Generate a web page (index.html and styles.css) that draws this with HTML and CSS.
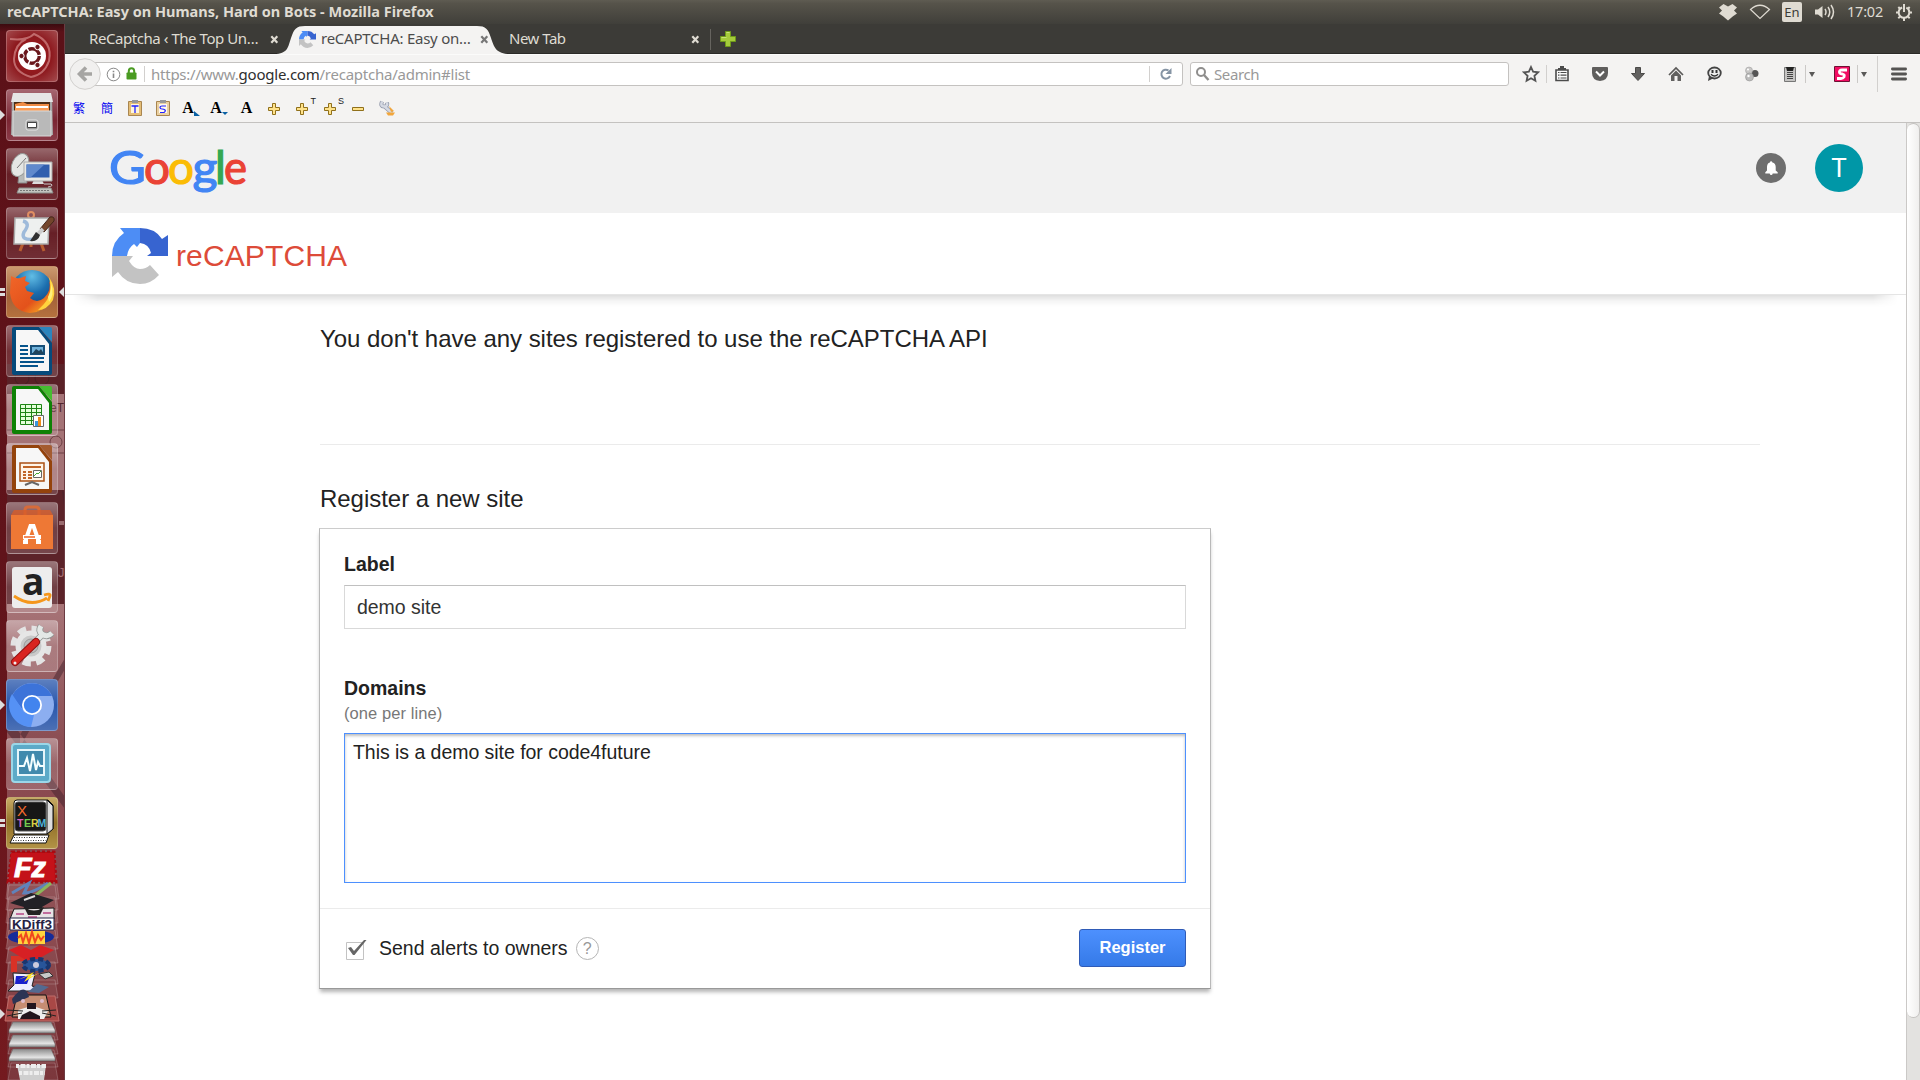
FILE: index.html
```html
<!DOCTYPE html>
<html lang="en">
<head>
<meta charset="utf-8">
<title>reCAPTCHA: Easy on Humans, Hard on Bots</title>
<link rel="stylesheet" href="styles.css">
</head>
<body>
<div class="desktop">
  <header class="panel">
    <div class="panel-title">reCAPTCHA: Easy on Humans, Hard on Bots - Mozilla Firefox</div>
    <div class="indicators">
      <svg class="ind-dropbox" width="20" height="18" viewBox="0 0 20 18"><path fill="#dfdbd2" d="M5.5 1 10 3.6 14.5 1 19 4.5 16 7.5 19 10.500 15 13.200 10 17.500 5 13.200 1 10.500 4 7.500 1 4.500Z"/></svg>
      <svg class="ind-wifi" width="22" height="16" viewBox="0 0 22 16"><path fill="none" stroke="#dfdbd2" stroke-width="1.200" d="M1.500 5.500Q11-3 20.500 5.500L11 14.500Z"/></svg>
      <span class="ind-lang">En</span>
      <svg class="ind-vol" width="22" height="18" viewBox="0 0 22 18"><path fill="#dfdbd2" d="M1 6.500h3L8.500 3v12L4 11.500H1Z"/><path fill="none" stroke="#dfdbd2" stroke-width="1.500" d="M11 6q2 3 0 6M14 4q3.500 5 0 10M17 2q5 7 0 14"/></svg>
      <span class="ind-clock">17:02</span>
      <svg class="ind-gear" width="18" height="18" viewBox="0 0 18 18"><g fill="none" stroke="#dfdbd2"><circle cx="9" cy="9.500" r="5.300" stroke-width="2" stroke-dasharray="29 4.300" stroke-dashoffset="-10.500" transform="rotate(180 9 9.500)"/><path stroke-width="2" d="M9 1v8M9 14.500V18M1 9.500h2.500M14.500 9.500H17M3.300 4l1.800 1.800M14.700 4l-1.800 1.800M3.300 15.200l1.800-1.800M14.700 15.200l-1.800-1.800"/></g></svg>
    </div>
  </header>

  <div class="workspace">
    <nav class="launcher">
      <svg class="launcher-ghost" width="65" height="1056" viewBox="0 24 65 1056">
        <defs><linearGradient id="gb" x1="0" y1="0" x2="0" y2="1"><stop offset="0" stop-color="#a77477"/><stop offset=".28" stop-color="#8c4f54"/><stop offset=".55" stop-color="#8a454b"/><stop offset="1" stop-color="#6f2429"/></linearGradient></defs>
        <path fill="#5a2127" d="M7 364h58v31H7z"/><path fill="#a47376" d="M7 394h58v98H7z"/><path fill="#5c2329" d="M7 490h58v115H7z"/><path fill="url(#gb)" d="M7 604h58v476H7z"/>
        <path fill="none" stroke="#6d4045" d="M65 430H7M65 453H7"/><circle cx="56" cy="442" r="6" fill="none" stroke="#6d4045"/><path fill="#41222b" d="m62 490 3 4v20zM65 658 20 735v12l45-78zM7 715l58 82v12L7 732z" opacity=".5"/>
        <circle cx="22" cy="378" r="7" fill="none" stroke="#452025"/><circle cx="42" cy="378" r="7" fill="none" stroke="#452025"/>
        <text x="50" y="412" font-size="12" fill="#53252c" textLength="14">e T</text><text x="58" y="577" font-size="13" fill="#a56e72" textLength="6">J</text>
        <path fill="#9a6b6f" d="M59 521h6v4h-6z"/><path stroke="#6b3b42" d="M64.500 24v1056"/>
      </svg>
      <div class="tiles">
        <div class="tile tile-ubuntu"><svg viewBox="0 0 52 52"><path fill="none" stroke="#d48a8a" stroke-width="2" opacity=".7" d="M4 9q17 2 24-5Q47 12 43 31q-5 14-18 16Q8 42 8 29 9 14 20 9"/><circle cx="26" cy="26" r="14" fill="#fff"/><circle cx="26" cy="26" r="7.300" fill="none" stroke="#6a171c" stroke-width="3.400" stroke-dasharray="13.800 1.500"/><g fill="#6a171c" stroke="#fff"><circle cx="15.500" cy="26" r="2.700"/><circle cx="31.500" cy="17" r="2.700"/><circle cx="31.500" cy="35" r="2.700"/></g></svg></div>
        <div class="tile tile-files"><i class="run"></i><svg viewBox="0 0 52 52"><path fill="#a7a7a7" d="M6 8h40l1 38H5z"/><path fill="#e6e6e6" d="M7 4h38l2 9H5z"/><path fill="#4d2e17" d="M8 13h36v10H8z"/><path fill="#f08c45" d="m9 15 8-2 4 2h22v8H9z"/><path fill="#fff" d="M10 17h32v2H10z"/><path fill="#fb9c55" d="M9 19h34v3H9z"/><path fill="#b9b9b9" stroke="#d9d9d9" d="M7 22h38v25H7z"/><rect x="20" y="31" width="12" height="10" rx="2" fill="#999" stroke="#e5e5e5"/><path fill="#fff" stroke="#444" d="M21.500 33.500h9v5h-9z"/></svg></div>
        <div class="tile"><svg viewBox="0 0 52 52"><path fill="#b7bab8" stroke="#888" d="M13 25h5l3 10h-9z"/><ellipse cx="14" cy="17" rx="8" ry="12" transform="rotate(25 14 17)" fill="#e4e6e4" stroke="#969996"/><path stroke="#777" d="m11 20 9-10"/><path fill="#ddd" d="M28 32h8l2 4H26z"/><path fill="#e8e8e4" stroke="#aaa" d="M18 14h28v19H18z"/><path fill="#315fae" d="M20.500 16.500h23v13h-23z"/><path fill="#6089cc" d="M20.500 16.500h18l-14 13h-4z"/><path fill="#c2c4bf" stroke="#898b87" d="M13 40h32l2 5H11z"/><path stroke="#777" stroke-dasharray="2 1" d="M14 42.500h30"/><path fill="none" stroke="#ccc" d="M38 36h7q3 2-3 3"/></svg></div>
        <div class="tile"><svg viewBox="0 0 52 52"><path fill="none" stroke="#b85e31" stroke-width="3" d="m17 36-3 8M35 36l3 8M25 37v3"/><circle cx="25" cy="8" r="3" fill="none" stroke="#df8e62" stroke-width="2"/><path fill="#eef0ef" stroke="#aaa" stroke-width="1.500" d="M9 11h34l-1 26H8z"/><path fill="none" stroke="#89acd4" stroke-width="3.500" d="M17 14q8 2 1 11-4 9 11 7" opacity=".8"/><path fill="#73452b" stroke="#432519" d="m34 22 10-12q5-1 4 4L38 25z"/><path stroke="#ccc" stroke-width="4" d="m37 22-5 5"/><path fill="#303030" d="m30 25 4 3q-2 7-10 6z"/></svg></div>
        <div class="tile tile-firefox"><i class="run two"></i><i class="focus"></i><svg viewBox="0 0 52 52"><defs><radialGradient id="fb" cx=".5" cy=".15" r=".8"><stop offset="0" stop-color="#61bde5"/><stop offset=".5" stop-color="#1c6eae"/><stop offset="1" stop-color="#123b78"/></radialGradient><linearGradient id="fo" x1="0" y1="0" x2="1" y2="1"><stop offset="0" stop-color="#f16629"/><stop offset=".6" stop-color="#e3521b"/><stop offset="1" stop-color="#ffcb28"/></linearGradient></defs><circle cx="26" cy="25" r="21" fill="url(#fb)"/><path fill="url(#fo)" d="M5 10q5 3 9 2l6-2-1 5 5 2-5 4 2 4 7 2-4 5q7 6 14 0 8-8 5-17 7 9 1 20-7 12-20 12Q6 45 4 27z"/><path fill="#ffd33d" d="M38 38q9-10 5-27 8 12 4 23-6 10-15 10z"/><path fill="#fff07c" d="M42 31q4-7 3-15 4 13-2 20z"/></svg></div>
        <div class="tile tile-clear"><svg viewBox="0 0 52 52"><path fill="#064a7b" d="M6 4q0-2 2-2h25l13 16v30q0 2-2 2H8q-2 0-2-2z"/><path fill="#2b85bd" d="M33 2h11q2 0 2 2v13z"/><path fill="#f7f7f7" d="M10 5h22l11 14v27H10z"/><path stroke="#06548b" stroke-width="2" d="M14 21h8M14 25h8M14 29h8M14 33h24M14 37h24M14 41h18"/><path fill="#6fb1da" stroke="#164f78" stroke-width="2" d="M25 21h13v8H25z"/><path fill="#20445b" d="m26 29 4-5 3 2 2-2 3 5z"/></svg></div>
        <div class="tile tile-clear"><svg viewBox="0 0 52 52"><path fill="#0e8105" d="M6 4q0-2 2-2h25l13 16v30q0 2-2 2H8q-2 0-2-2z"/><path fill="#45bd30" d="M33 2h11q2 0 2 2v13z"/><path fill="#f7f7f7" d="M10 5h22l11 14v27H10z"/><path fill="#e3ffd9" stroke="#1d8415" d="M14.500 20.500h21v20h-21zM14 24.500h22M14 28.500h22M14 32.500h22M14 36.500h22M19.500 20v21M25.500 20v21M30.500 20v21"/><path fill="#fff" stroke="#666" d="M27.500 31.500h10v11h-10z"/><path fill="#3996db" d="M29 37h3v5h-3z"/><path fill="#ef8b19" d="M32 33h3v9h-3z"/></svg></div>
        <div class="tile tile-clear"><svg viewBox="0 0 52 52"><path fill="#94430c" d="M6 4q0-2 2-2h25l13 16v30q0 2-2 2H8q-2 0-2-2z"/><path fill="#a45b30" d="M33 2h11q2 0 2 2v13z"/><path fill="#f7f7f7" d="M10 5h22l11 14v27H10z"/><path fill="#fff5e8" stroke="#aa5014" stroke-width="1.500" d="M14 20h24v18H14z"/><path stroke="#c06527" stroke-width="1.800" d="M17 24h18M17 29h3M17 32h3M17 35h3M22 29h4M22 32h4M22 35h4"/><path fill="#fff" stroke="#666" d="M27.500 27.500h8v7h-8z"/><path fill="none" stroke="#47a838" d="m28 33 3-3 1 1 3-3"/><path fill="none" stroke="#666" stroke-width="2" d="m19 42 7-3 7 3"/></svg></div>
        <div class="tile tile-clear"><svg viewBox="0 0 52 52"><path fill="none" stroke="#d66b3a" stroke-width="3" d="M19 18V8q0-3 3-3h8q3 0 3 3v10"/><path fill="#ee7835" d="M5 13h42v34H5z"/><path fill="#d75d29" d="m5 13 3-5h36l3 5z" opacity=".8"/><path fill="none" stroke="#fff" stroke-width="4" d="M19 40 24.500 24h3L33 40M17 35h18M17 40h5M30 40h5"/><path stroke="#ef6424" stroke-width="1.500" d="M18 35h11"/></svg></div>
        <div class="tile tile-clear"><svg viewBox="0 0 52 52"><rect x="6" y="6" width="40" height="41" rx="3" fill="#ededed"/><text x="16" y="34" font-family="Open Sans" font-weight="700" font-size="37" fill="#222">a</text><path fill="none" stroke="#f5971c" stroke-width="2.800" d="M8 35q17 12 33 2M38 34q7-2 6 1l-2 5"/></svg></div>
        <div class="tile tile-clear"><svg viewBox="0 0 52 52"><circle cx="25" cy="26" r="17" fill="none" stroke="#e3e3e3" stroke-width="7" stroke-dasharray="8 5.350"/><circle cx="25" cy="26" r="13" fill="#c9c9c9" stroke="#e6e6e6" stroke-width="5"/><circle cx="25" cy="26" r="7" fill="#bbb" stroke="#999"/><path fill="none" stroke="#8e9391" stroke-width="6.500" d="m31 20 7-7M35 6q-3 5 1 8 5 4 10-1"/><path fill="none" stroke="#e3e8e6" stroke-width="5" d="m31 20 7-7M35 6q-3 5 1 8 5 4 10-1"/><path stroke="#8f1313" stroke-width="8" stroke-linecap="round" d="M9 42 30 22"/><path stroke="#d92420" stroke-width="6" stroke-linecap="round" d="M9 42 30 22"/><circle cx="9" cy="43" r="1.500" fill="#eee"/></svg></div>
        <div class="tile tile-chromium"><i class="run"></i><svg viewBox="0 0 52 52"><circle cx="26" cy="26" r="22" fill="#8caef0"/><path fill="#3c73d9" d="M6 17a22 22 0 0 1 40 0H26L17 31z"/><path fill="#5591f5" d="M6 15 18 33l10 3-3 12A22 22 0 0 1 6 15"/><circle cx="26" cy="26" r="10" fill="#fff"/><circle cx="26" cy="26" r="8.200" fill="#4284ee"/></svg></div>
        <div class="tile tile-clear"><svg viewBox="0 0 52 52"><rect x="6" y="6" width="38" height="38" rx="3" fill="#5caac8" stroke="#9bd7e8" stroke-width="2"/><path fill="#408aad" stroke="#e5f5fa" stroke-width="2" d="M12 12h26v25H12z"/><path fill="none" stroke="#f4ffff" stroke-width="2" d="M13 28h5l3-8 3 13 3-17 3 16 2-8 2 4h4"/></svg></div>
        <div class="tile tile-xterm"><i class="run two"></i><svg viewBox="0 0 52 52"><path fill="#fff" stroke="#111" d="M8 6q0-3 3-3h31l5 5v24l-6 5H8z"/><path fill="#ddd" stroke="#111" d="m41 3 6 6v23l-6 5z"/><rect x="9" y="5" width="31" height="29" rx="3" fill="#171717" stroke="#555"/><text x="11" y="19" font-size="15" fill="#f46b2c">X</text><g font-size="10.500" font-weight="700"><text x="11" y="30" fill="#db62ba">T</text><text x="18" y="30" fill="#72ca50">E</text><text x="25" y="30" fill="#d8d044">R</text><text x="31.500" y="30" fill="#4eb1d8">M</text></g><path fill="#fff" stroke="#111" d="M8 38h35l-3 8H4z"/><path stroke="#333" stroke-dasharray="1 1.500" d="M8 40.500h33M7 43.500h33"/></svg></div>
      </div>
      <svg class="stack" width="65" height="231" viewBox="0 849 65 231">
        <defs><linearGradient id="dr" x1="0" y1="0" x2="0" y2="1"><stop offset="0" stop-color="#8c8c8c"/><stop offset=".7" stop-color="#e4e4e4"/><stop offset="1" stop-color="#888"/></linearGradient></defs>
        <g fill="#fff" fill-opacity=".09" stroke="#fff" stroke-opacity=".2"><path d="m9 872 46 0 4 27H6zM9 885h46l3 25H6zM9 897h46l3 26H6zM9 910h46l3 28H6zM9 930h46l3 19H6zM9 947h46l3 16H6zM9 962h46l3 22H6zM9 980h46l3 18H6zM12 1022h42l4 18H8zM12 1036h42l4 18H8zM12 1050h42l4 17H8zM11 1063h44l3 17H8z"/></g>
        <path fill="#b80d12" stroke="#a80b12" stroke-width="3" stroke-dasharray="3 2" d="M12 852h42l2 30H8z"/><path fill="#c41219" d="M11 853h43l1 27H9z"/>
        <text x="14" y="877" font-size="28" font-weight="700" font-style="italic" fill="#fff" stroke="#fff" textLength="32" lengthAdjust="spacingAndGlyphs">Fz</text>
        <path fill="none" stroke="#5f83bb" stroke-width="3" d="M12 893 29 883 24 893Q31 894 48 883"/><path stroke="#8bb65b" stroke-width="3" d="m51 883-20 16"/>
        <path fill="#222126" d="m10 903 21-10 23 7-12 7q6 5-4 7H21l3-7z"/><path stroke="#ddd" stroke-width="2" d="m24 900 11-4"/>
        <path fill="#e8e3e5" stroke="#181818" d="m14 909 40-1 0 11H10z"/><path fill="#222" d="M24 907q10 7 20 0l-4 8H28z"/><path stroke="#c26c9d" stroke-width="2" d="M16 914h8M28 917h9M43 913h8"/><path fill="#fff" stroke="#252343" d="M10 918h44v12H10z"/><text x="12" y="929" font-size="12" font-weight="700" fill="#262244" textLength="40" lengthAdjust="spacingAndGlyphs">KDiff3</text>
        <ellipse cx="31" cy="937" rx="23" ry="7" fill="#162b99"/><path fill="#ffd33e" d="M18 931h27v13H18z"/><path fill="none" stroke="#f0471f" stroke-width="2" d="m18 938 3-3 2 7 3-9 3 10 3-11 3 10 3-7 3 5 3-4"/>
        <path fill="#d83226" d="M11 956h17v5H17v11h-6z"/><path fill="#d72024" d="m9 950 12-5 10 5 9-5 14 5-23 13z"/>
        <ellipse cx="36" cy="965" rx="13" ry="6" fill="#28559a" stroke="#19366f" stroke-width="4" stroke-dasharray="5 3"/><circle cx="36" cy="965" r="3" fill="#ccd"/>
        <path fill="#eef" stroke="#222" d="m13 973 22 1-3 12 8 3-6 2H8l6-6z"/><path fill="#1920cc" d="M16 976h14l-3 8H15z"/><path fill="#ffe425" d="m18 980 16-8-4 5 9-4-15 9 4-6z"/><path fill="#c7c9c8" stroke="#333" d="m39 974 10-2 4 4-8 3z"/><path fill="#536a91" d="m28 992 9-8 12 3-10 6z"/>
        <path fill="#a94846" stroke="#c06c69" d="M9 996h46l4 25H5z"/><path fill="#c68d73" stroke="#111" d="M17 995h29l5 22H12z"/><path fill="#2d3454" d="M12 999q13-18 17-2l-16 7z"/><path fill="#eee" d="m18 1010 10-3h8l12 4-4 8H18z"/><path fill="#21151d" d="M27 1003h9v6h-9zM22 1015l8-4 10 5v3H20z"/><path stroke="#222" d="m7 1010 16 1M7 1016l15-3M56 1010l-14 1M56 1016l-14-3"/><circle cx="23" cy="1001" r="2" fill="#dbc"/><circle cx="42" cy="1001" r="2" fill="#dbc"/>
        <g fill="url(#dr)" stroke="#666" stroke-width=".5"><path d="m13 1022 38 0 4 8v3H9v-3z"/><path d="M13 1035h38l4 9v3H9v-3z"/><path d="M13 1049h38l4 9v3H9v-3z"/></g><path fill="#cfcfcf" d="M17 1065h29l-2 15H20z"/><path stroke="#eee" stroke-width="4" stroke-dasharray="3 1.500 5 1" d="M16 1066h30M19 1073h26"/>
        <path fill="#ddd" d="m0 1009 5 5-5 5z"/>
      </svg>
    </nav>

    <main class="browser">
      <div class="tabs">
        <div class="tab tab-first"><span class="t1">ReCaptcha ‹ The Top Un…</span><svg class="x" viewBox="0 0 9 9"><path d="m1.300 1.300 6 6.400m0-6.400-6 6.400"/></svg></div>
        <div class="tab tab-active">
          <svg class="tab-shape" width="240" height="29" viewBox="0 0 240 29"><path fill="#f4f3f2" d="M0 29C14 29 14 22 17 13 20 4 22 1 31 1H203C212 1 214 4 217 13 220 22 222 29 236 29Z" transform="translate(-6)"/></svg>
          <svg class="favicon" width="17" height="17" viewBox="0 0 56 56"><use href="#rc"/></svg><span class="t2">reCAPTCHA: Easy on…</span><svg class="x dark" viewBox="0 0 9 9"><path d="m1.300 1.300 6 6.400m0-6.400-6 6.400"/></svg>
        </div>
        <div class="tab tab-new"><span class="t3">New Tab</span><svg class="x" viewBox="0 0 9 9"><path d="m1.300 1.300 6 6.400m0-6.400-6 6.400"/></svg></div>
        <svg class="plus" width="18" height="18" viewBox="0 0 18 18"><path fill="#a5cb3b" stroke="#6f9a1a" d="M6.500 1.500h5v5h5v5h-5v5h-5v-5h-5v-5h5z"/><path stroke="#c9e378" d="M7.500 2.500h3M2.500 7.500h5"/></svg>
      </div>

      <div class="navbar">
        <div class="urlbar">
          <svg class="back" width="32" height="32" viewBox="0 0 32 32"><circle cx="16" cy="16" r="15.300" fill="#f1f0ef" stroke="#d2d0ce"/><path fill="none" stroke="#a6a5a3" stroke-width="3.600" d="m17 9.500-6.500 6.500 6.500 6.500M11 16h12"/></svg>
          <svg class="info" width="15" height="15" viewBox="0 0 15 15"><circle cx="7.500" cy="7.500" r="6.300" fill="none" stroke="#888"/><path stroke="#888" stroke-width="1.600" d="M7.500 6.500V11M7.500 3.700v1.500"/></svg>
          <svg class="lock" width="11" height="13" viewBox="0 0 11 13"><path fill="none" stroke="#4a9b22" stroke-width="2" d="M2.800 6V4q0-2.800 2.700-2.800T8.200 4v2"/><rect x=".5" y="5.500" width="10" height="7" rx=".8" fill="#4a9b22"/></svg>
          <i class="sep"></i>
          <span class="url">https://www.<b>google.com</b>/recaptcha/admin#list</span>
          <span class="reload"><svg width="14" height="14" viewBox="0 0 14 14"><path fill="none" stroke="#8594a4" stroke-width="2" d="M11 9A4.500 4.500 0 1 1 9.500 3.500"/><path fill="#8594a4" d="M12.500 1v6h-6z"/></svg></span>
        </div>
        <div class="search"><svg width="16" height="16" viewBox="0 0 16 16"><circle cx="6" cy="6" r="4" fill="none" stroke="#8f8e8d" stroke-width="2"/><path stroke="#8f8e8d" stroke-width="2.400" d="m9 9 4.500 5"/></svg><span>Search</span></div>
        <div class="tools">
          <svg class="star" width="18" height="18" viewBox="0 0 18 18"><path fill="none" stroke="#555" stroke-width="1.800" d="m9 2 2.100 4.700 5 .6-3.700 3.500 1 5L9 13.300l-4.400 2.500 1-5L1.900 7.300l5-.6z"/></svg>
          <i class="sep"></i>
          <span class="tool"><svg width="16" height="16" viewBox="0 0 16 16"><path fill="#fafafa" stroke="#4b4b4b" stroke-width="1.600" d="M2 4h12v10.500H2z"/><path fill="#4b4b4b" d="M4 4V2h2V0h4v2h2v2z"/><path stroke="#4b4b4b" stroke-width="1.200" d="M4 6.500h1.500M6.500 6.500h6M4 9.200h1.500M6.500 9.200h6M4 12h1.500M6.500 12h6"/></svg></span>
          <span class="tool"><svg width="16" height="16" viewBox="0 0 16 16"><path fill="#5f5e5d" d="M0 2Q0 1 1 1h14q1 0 1 1v5q0 7-8 8Q0 14 0 7z"/><path fill="none" stroke="#fff" stroke-width="2" d="m4 5.500 4 4 4-4"/></svg></span>
          <span class="tool"><svg width="16" height="16" viewBox="0 0 16 16"><path fill="#626160" stroke="#4b4a49" d="M5.500 1.500h5v6h4L8 14.500l-6.500-7h4z"/></svg></span>
          <span class="tool"><svg width="16" height="16" viewBox="0 0 16 16"><path fill="none" stroke="#5b5a59" stroke-width="1.700" d="m1 9 7-7 7 7"/><path fill="#626160" d="m8 4.500 5 5V15H9.500v-5h-3v5H3V9.500z"/></svg></span>
          <span class="tool"><svg width="16" height="16" viewBox="0 0 16 16"><ellipse cx="8.500" cy="7" rx="6.300" ry="5.500" fill="#eee" stroke="#444" stroke-width="1.800"/><path fill="#444" d="m3 10-1 5 6-3z"/><path stroke="#333" stroke-width="2" d="M6.500 4v3M10.500 4v3"/><path fill="none" stroke="#333" stroke-width="1.300" d="M5 8.300q3.500 3.500 7 0"/></svg></span>
          <span class="tool"><svg width="16" height="16" viewBox="0 0 16 16"><circle cx="11" cy="7.500" r="3.500" fill="#555"/><circle cx="5" cy="4.500" r="3.500" fill="#c8c7c6" stroke="#999" stroke-width=".5"/><circle cx="5.500" cy="11" r="4" fill="#bbb" stroke="#888" stroke-width=".5"/><circle cx="4" cy="3.500" r="1" fill="#fff"/><circle cx="4.500" cy="10" r="1.200" fill="#fff"/></svg></span>
          <span class="tool"><svg width="16" height="16" viewBox="0 0 16 16"><path fill="#c5c4c3" stroke="#777" d="M2.500 1.500h11v14h-11z"/><path fill="#222" d="M4 1h8l-1 4H5z"/><path stroke="#444" d="M5 6.500h6M5 8.500h6M5 10.500h6M5 12.500h6"/></svg></span>
          <span class="drop"><i></i></span>
          <span class="stylish"><svg width="16" height="16" viewBox="0 0 16 16"><path fill="#f10c62" stroke="#6e1234" d="M.5.500h15v15H.5z"/><path fill="none" stroke="#fff" stroke-width="2.800" d="M13 4H8Q5 4 5.500 6.500 6 8 8.500 8 11 8.500 10 11 9 12.500 7 12.500H3"/></svg></span>
          <span class="drop"><i></i></span>
          <i class="sep tall"></i>
          <svg class="menu" width="16" height="14" viewBox="0 0 16 14"><path stroke="#555453" stroke-width="2.800" stroke-linecap="round" d="M1.400 2h13.200M1.400 7h13.200M1.400 12h13.200"/></svg>
        </div>
      </div>

      <div class="addons">
        <span class="han">繁</span><span class="han">簡</span>
        <span><svg width="14" height="16" viewBox="0 0 14 16"><path fill="#e5be78" stroke="#a98650" d="M.5 1.500h13v14H.5z"/><path fill="#fff5dc" d="M3 4h8v9H3z"/><path fill="#999" d="M4 0h6v3H4z"/><path stroke="#22f" stroke-width="1.300" d="M3.500 6h7M7 6v7"/></svg></span>
        <span><svg width="14" height="16" viewBox="0 0 14 16"><path fill="#ead0a2" stroke="#a98650" d="M.5 1.500h13v14H.5z"/><path fill="#fff9ed" d="M3 4h8v9H3z"/><path fill="#999" d="M4 0h6v3H4z"/><path fill="none" stroke="#22f" stroke-width="1.200" d="M10 6H6q-2 0-2 1.500T6 9t3 1-1 2.500H4"/></svg></span>
        <span class="az">A<svg width="6" height="6" viewBox="0 0 6 6"><path fill="#0961a4" d="m0 1 6 5H0z"/></svg></span>
        <span class="az">A<svg width="6" height="6" viewBox="0 0 6 6"><path fill="#0961a4" d="M0 2h6L3 5z"/></svg></span>
        <span class="az plain">A</span>
        <span class="plusgold"><svg width="14" height="14" viewBox="0 0 14 14"><path class="gold" d="M5.500 1.500h3v4h4v3h-4v4h-3v-4h-4v-3h4z"/></svg></span>
        <span class="sup"><svg width="14" height="14" viewBox="0 0 14 14"><path class="gold" d="M5.500 1.500h3v4h4v3h-4v4h-3v-4h-4v-3h4z"/></svg><i>T</i></span>
        <span class="sup"><svg width="14" height="14" viewBox="0 0 14 14"><path class="gold" d="M5.500 1.500h3v4h4v3h-4v4h-3v-4h-4v-3h4z"/></svg><i>S</i></span>
        <span class="plusgold"><svg width="14" height="14" viewBox="0 0 14 14"><path class="gold" d="M1.500 5.500h11v3h-11z"/></svg></span>
        <span><svg width="16" height="16" viewBox="0 0 16 16"><path fill="none" stroke="#8f96a8" stroke-width="4" d="m5 6 8 7M3 1.500q-2 5 2 5t3-4"/><path fill="none" stroke="#d5d9e3" stroke-width="2.500" d="m5 6 8 7M3 1.500q-2 5 2 5t3-4"/><path fill="#f2a63b" d="m10 6 5 5-3 1zM7 12.500h9l-2 3H9z"/></svg></span>
      </div>

      <div class="viewport">
        <div class="page">
          <div class="gbar">
            <svg class="glogo" width="144" height="66" viewBox="-4 -10 144 66"><g font-family="Lato" font-size="46" stroke-width="1.200"><text x="-2" y="36" fill="#4285f4" stroke="#4285f4" textLength="37" lengthAdjust="spacingAndGlyphs">G</text><text x="33" y="36" fill="#ea4335" stroke="#ea4335" textLength="26" lengthAdjust="spacingAndGlyphs">o</text><text x="57" y="36" fill="#fbbc05" stroke="#fbbc05" textLength="26" lengthAdjust="spacingAndGlyphs">o</text><text x="81.500" y="36" fill="#4285f4" stroke="#4285f4" textLength="25" lengthAdjust="spacingAndGlyphs">g</text><text x="104" y="36" fill="#34a853" stroke="#34a853">l</text><text x="113" y="36" fill="#ea4335" stroke="#ea4335" textLength="23" lengthAdjust="spacingAndGlyphs">e</text></g></svg>
            <div class="account">
              <svg width="30" height="30" viewBox="0 0 30 30"><circle cx="15" cy="15" r="15" fill="#6e6e6e"/><path fill="#fff" d="M15 8.200q1.200 0 1.400 1.200 3.300.9 3.300 4.600v3.500l2 1.700v1.200H9.300v-1.200l1.700-1.700V14q0-3.700 2.900-4.600.200-1.200 1.100-1.200M13.700 20.500h3q-.2 1.600-1.500 1.600t-1.500-1.600"/></svg>
              <div class="avatar">T</div>
            </div>
          </div>
          <div class="product">
            <svg width="56" height="56" viewBox="0 0 56 56"><g id="rc"><path fill="#4d8df5" d="M28 0H8l4 5Q0 13 0 28h15q1-8 7-12l3 3 3-4z"/><path fill="#3764d0" d="M28 0q15 0 22 11l6-4v21H35l4-3q-2-9-11-10z"/><path fill="#c3c3c3" d="M0 28h21l-4 5q5 8 11 8t10-4l9 10q-8 9-19 9Q14 56 6 44l-6 5z"/></g></svg>
            <h1>reCAPTCHA</h1>
          </div>
          <div class="bar-shadow"></div>
          <div class="content">
            <h2 class="empty">You don't have any sites registered to use the reCAPTCHA API</h2>
            <h2 class="register-title">Register a new site</h2>
            <form class="card">
              <div class="fields">
                <label class="lab">Label</label>
                <div class="input">demo site</div>
                <label class="lab dom">Domains</label>
                <div class="hint">(one per line)</div>
                <div class="textarea">This is a demo site for code4future</div>
              </div>
              <div class="actions">
                <svg class="check" width="22" height="22" viewBox="0 0 22 22"><path fill="#fff" stroke="#c3c3c3" d="M1.500 4.500h17v17h-17z"/><path fill="#666" d="m3 10 3-1 3 4L19 2h2.500L9.500 17H8z"/></svg>
                <span class="send">Send alerts to owners</span>
                <span class="help">?</span>
                <span class="button">Register</span>
              </div>
            </form>
          </div>
        </div>
        <div class="scrollbar"><div class="thumb"></div></div>
      </div>
    </main>
  </div>
</div>
</body>
</html>
```

FILE: styles.css
```css
* { box-sizing: border-box; }
body { margin: 0; font-family: "Liberation Sans", Arial, sans-serif; color: #222; background: #fff; }
svg { display: block; flex: none; }
.desktop { width: 1920px; height: 1080px; display: flex; flex-direction: column; overflow: hidden; }
.panel, .tabs, .navbar { font-family: "Noto Sans", "Open Sans", sans-serif; }

/* top panel */
.panel { height: 24px; flex: none; display: flex; align-items: center; justify-content: space-between; padding: 0 7px; color: #dfdbd2; background: linear-gradient(#5f5c52, #56534a 15%, #403f3a); white-space: nowrap; }
.panel-title { font-size: 14.5px; font-weight: 700; letter-spacing: 0; line-height: 22px; margin-top: -2px; }
.indicators { display: flex; align-items: center; }
.ind-wifi { margin-left: 11px; }
.ind-lang { width: 20px; height: 20px; margin-left: 11px; border-radius: 2px; background: #dfdbd2; color: #3c3b37; font-size: 13px; line-height: 20px; text-align: center; }
.ind-vol { margin-left: 12px; }
.ind-clock { width: 36px; margin-left: 11px; font-size: 14.5px; letter-spacing: -.2px; margin-top: -2px; }
.ind-gear { margin-left: 12px; }

.workspace { flex: 1; display: flex; min-height: 0; }

/* launcher */
.launcher { position: relative; width: 65px; flex: none; display: flex; flex-direction: column; justify-content: space-between; background: linear-gradient(#3b0b0f, #5c1118 8px, #60131a 50%, #741a1f); overflow: hidden; }
.launcher-ghost { position: absolute; left: 0; top: 0; }
.tiles { position: relative; display: flex; flex-direction: column; gap: 7px; padding: 6px 0 0 6px; }
.tile { position: relative; width: 52px; height: 52px; border-radius: 4px; border: 1px solid rgba(255,255,255,.22); background: linear-gradient(rgba(255,255,255,.36), rgba(255,255,255,.06) 50%, rgba(255,255,255,.12)); }
.tile svg { width: 52px; height: 52px; margin: -1px; overflow: visible; }
.tile-ubuntu { background: radial-gradient(#a91d20, #8d191e 55%, #a34a4d); }
.tile-files { background: linear-gradient(#a56670, #7a2532 60%, #8b3b48); }
.tile-firefox { background: linear-gradient(#cb996f, #a3623a 60%, #b5713e); }
.tile-clear { background: linear-gradient(rgba(255,255,255,.38), rgba(255,255,255,.13) 50%, rgba(255,255,255,.16)); }
.tile-chromium { background: linear-gradient(#5c7fbf, #2a57ac 50%, #4b70b5); }
.tile-xterm { background: linear-gradient(#c8ab66, #927028 50%, #b29346); }
.run { position: absolute; left: -7px; top: 20px; border: 5px solid transparent; border-left-color: #ddd; border-right: 0; }
.run.two { top: 21px; width: 5px; height: 8px; border: solid #ddd; border-width: 3px 0; }
.focus { position: absolute; right: -7px; top: 20px; border: 5px solid transparent; border-right-color: #ddd; border-left: 0; }
.stack { position: relative; }

/* browser chrome */
.browser { flex: 1; display: flex; flex-direction: column; min-width: 0; }
.tabs { height: 30px; flex: none; display: flex; background: #3c3b37; border-bottom: 1px solid #2b2a27; color: #dfdbd2; font-size: 15px; white-space: nowrap; }
.tab { position: relative; display: flex; align-items: center; height: 30px; padding-bottom: 1px; }
.tab span { position: relative; flex: none; margin-top: -2px; }
.tab-first { width: 215px; padding-left: 24px; }
.tab-active { width: 229px; padding-left: 19px; color: #4c4c4c; }
.tab-shape { position: absolute; left: 0; top: 1px; overflow: visible; }
.favicon { position: relative; margin: 2px 5px 0 0; }
.x { position: relative; width: 9px; height: 9px; margin-top: 1px; stroke: #dfdbd2; stroke-width: 2.2; fill: none; }
.x.dark { stroke: #777; }
.t1 { width: 181px; letter-spacing: -.44px; }
.t2 { width: 159px; letter-spacing: -.25px; }
.tab-new { width: 202px; height: 21px; margin-top: 5px; padding: 0; border-right: 1px solid #66645f; }
.tab .t3 { width: 182px; letter-spacing: -.5px; margin-top: -3px; }
.tab-new .x { margin-top: 0; }
.plus { margin: 6px 0 0 8px; }

.navbar { height: 39px; flex: none; display: flex; align-items: center; padding-left: 4px; background: #f4f3f2; border-top: 1px solid #fbfbfa; }
.urlbar { position: relative; width: 1100px; height: 24px; margin-left: 14px; display: flex; align-items: center; background: #fff; border: 1px solid #c4c2c0; border-radius: 3px; font-size: 15px; color: #999; }
.back { position: absolute; left: -15px; top: -5px; }
.info { margin-left: 22px; }
.lock { margin: -1px 0 0 5px; }
.sep { width: 1px; height: 18px; background: #d2d0ce; flex: none; }
.urlbar .sep { margin-left: 7px; height: 16px; }
.url { margin-left: 6px; letter-spacing: -.24px; flex: 1; line-height: 20px; }
.url b { font-weight: 400; color: #2e2e2e; }
.reload { width: 33px; height: 16px; border-left: 1px solid #d2d0ce; display: flex; align-items: center; justify-content: center; }
.search { width: 319px; height: 24px; margin-left: 7px; padding-left: 4px; display: flex; align-items: center; gap: 3px; background: #fff; border: 1px solid #c4c2c0; border-radius: 3px; font-size: 15px; color: #999; letter-spacing: -.4px; }
.tools { display: flex; align-items: center; margin-left: 13px; }
.star { margin-right: 6px; }
.tool { width: 38px; display: flex; justify-content: center; }
.tools > .sep { margin-right: -4px; }
.drop { width: 13px; height: 18px; margin-left: -4px; border-left: 1px solid #cbc9c7; display: flex; align-items: center; justify-content: center; }
.drop i { border: 3px solid transparent; border-top: 5px solid #5a5958; border-bottom: 0; }
.stylish { margin: 0 11px 0 16px; }
.tools > .tall { height: 36px; margin: 0 13px 0 7px; }

.addons { height: 30px; flex: none; display: flex; align-items: center; background: #f4f3f2; border-bottom: 1px solid #c4c2c0; }
.addons > span { width: 28px; flex: none; display: flex; align-items: center; justify-content: center; }
.addons > .han { font: 12px "Noto Sans CJK TC", sans-serif; color: #0000f0; }
.addons > .az { font: 700 16px/16px "Liberation Serif", serif; color: #000; align-items: flex-end; }
.addons > .plain { padding-right: 1px; }
.addons > .plusgold, .addons > .sup { padding: 2px 2px 0 0; }
.gold { fill: #ffe28a; stroke: #90701b; }
.sup { position: relative; }
.sup i { position: absolute; right: 1px; top: -4px; font: 9px/10px "Liberation Sans", sans-serif; color: #222; }

/* page */
.viewport { flex: 1; display: flex; min-height: 0; }
.page { flex: 1; background: #fff; }
.gbar { height: 90px; background: #f1f1f1; display: flex; justify-content: space-between; align-items: center; padding: 0 43px 0 42px; }
.glogo { margin-top: 5px; overflow: visible; }
.account { display: flex; align-items: center; gap: 29px; }
.avatar { width: 48px; height: 48px; border-radius: 50%; background: #0097a7; color: #fff; font: 26px/49px Roboto, sans-serif; text-align: center; }
.product { height: 82px; display: flex; align-items: center; padding: 5px 0 0 47px; border-bottom: 1px solid #e5e5e5; background: #fff; }
.product h1 { margin: -1px 0 0 8px; font-size: 30px; font-weight: 400; letter-spacing: .12px; color: #dd4b39; line-height: 34px; }
.bar-shadow { height: 12px; margin: 0 8px; background: linear-gradient(rgba(0,0,0,.13), rgba(0,0,0,.04) 50%, transparent); mask-image: linear-gradient(90deg, transparent, #000 25px, #000 calc(100% - 25px), transparent); }
.content { margin-left: 254px; }
.content h2 { margin: 0 0 0 1px; font-size: 24px; font-weight: 400; line-height: 30px; color: #222; letter-spacing: -.03px; }
.empty { width: 1440px; height: 138px; padding-top: 17px; border-bottom: 1px solid #ebebeb; }
.content .register-title { margin-top: 39px; }
.card { width: 892px; height: 461px; margin-top: 14px; border: 1px solid #b9b9b9; border-top-color: #ccc; border-bottom-color: #999; box-shadow: 0 4px 4px -1px rgba(0,0,0,.3); display: flex; flex-direction: column; font-size: 19.5px; background: #fff; }
.fields { flex: 1; padding: 23px 24px 0; border-bottom: 1px solid #ebebeb; }
.lab { display: block; font-weight: 700; line-height: 24px; }
.input { height: 44px; margin-top: 9px; border: 1px solid #d9d9d9; border-top-color: #c0c0c0; padding-left: 12px; line-height: 43px; color: #333; letter-spacing: -.04px; }
.dom { margin-top: 47px; }
.hint { font-size: 16.5px; line-height: 24px; margin-top: 1px; color: #777; letter-spacing: .08px; }
.textarea { height: 150px; margin-top: 8px; border: 1px solid #4d90fe; box-shadow: inset 0 2px 3px rgba(0,0,0,.25); padding: 5px 8px; line-height: 26px; letter-spacing: -.04px; }
.actions { height: 79px; flex: none; display: flex; align-items: center; padding: 0 24px 0 25px; }
.check { margin-right: 12px; }
.help { width: 23px; height: 23px; margin-left: 8px; border: 1.5px solid #b5b5b5; border-radius: 50%; color: #999; font-size: 16px; line-height: 21px; text-align: center; }
.button { width: 107px; height: 38px; margin: -2px 0 0 auto; border: 1px solid #2f5bb7; border-radius: 3px; background: linear-gradient(#4d90fe, #357ae8); color: #fff; font-size: 16.5px; font-weight: 700; line-height: 35px; text-align: center; }
.scrollbar { width: 14px; background: #e3e2e0; border-left: 1px solid #cbc9c7; flex: none; }
.thumb { height: 895px; border: 1px solid #c4c2c0; border-left: 0; border-radius: 7px; background: linear-gradient(90deg, #fff, #f0efee); }
```
